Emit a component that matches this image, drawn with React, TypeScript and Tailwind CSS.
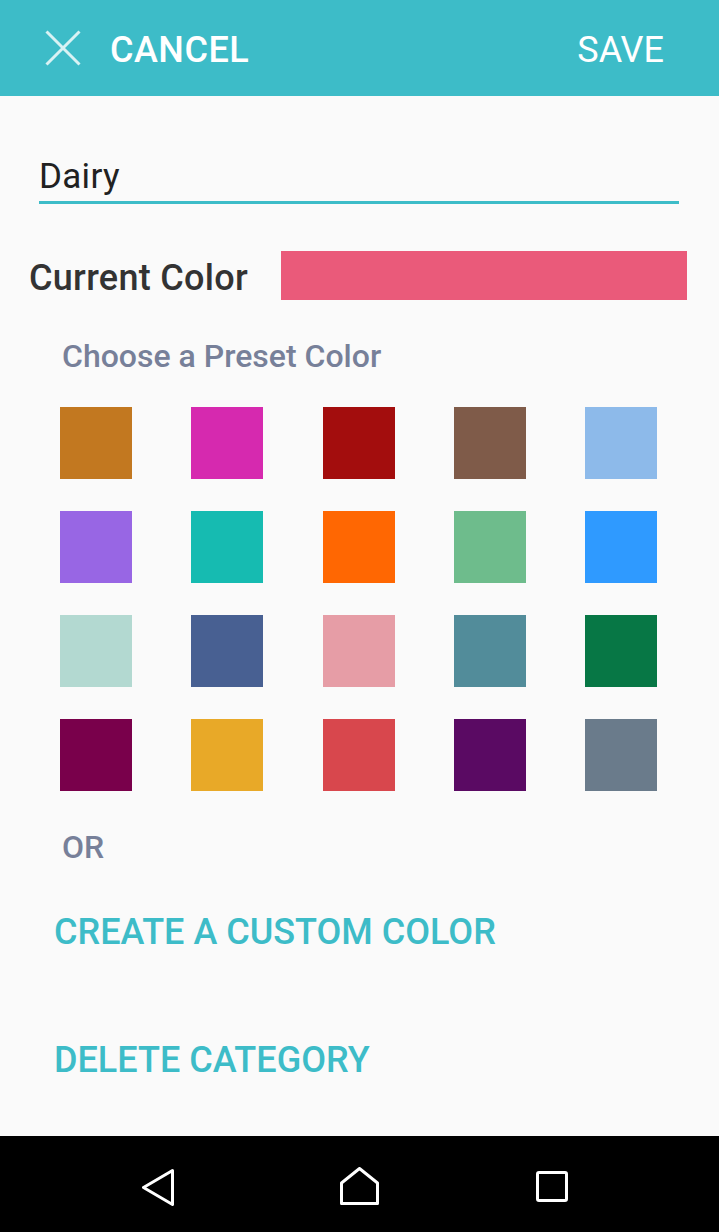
import React from 'react';

const presets = [
  '#C27820', '#D629AF', '#A30D0D', '#7F5B49', '#8DBAEA',
  '#9866E4', '#16BBB1', '#FF6702', '#6EBC8C', '#2F9AFF',
  '#B3D9D1', '#486092', '#E69DA6', '#528C9A', '#077745',
  '#79004B', '#E8A928', '#D8474D', '#5A0A63', '#6A7B8B',
];

function App() {
  return (
    <div className="flex h-[1232px] w-full flex-col bg-[#fafafa] font-['Roboto',sans-serif]">
      {/* top bar */}
      <header className="flex h-[96px] shrink-0 items-center bg-[#3dbcc8] pl-[45px] pr-[55px]">
        <svg width="36" height="36" viewBox="0 0 36 36" className="shrink-0">
          <path d="M1.5 1.5 L34.5 34.5 M34.5 1.5 L1.5 34.5" stroke="#ffffff" strokeOpacity="0.8" strokeWidth="3" />
        </svg>
        <span className="ml-[29px] pt-[3px] text-[36px] leading-[36px] font-medium tracking-[0.5px] text-white">CANCEL</span>
        <span className="ml-auto pt-[3px] text-[36px] leading-[36px] font-normal text-white">SAVE</span>
      </header>

      <main className="flex flex-1 flex-col">
        <div className="ml-[39px] mt-[63px] w-[640px] border-b-[3px] border-[#3dbcc8] pb-[7px]">
          <div className="text-[35px] leading-[35px] tracking-[0.3px] text-[#212121]">Dairy</div>
        </div>

        <div className="mt-[47px] flex items-start pl-[29px] pr-[32px]">
          <span className="mt-[9px] w-[252px] shrink-0 text-[36px] leading-[36px] font-medium tracking-[0.3px] text-[#333333]">
            Current Color
          </span>
          <div className="h-[49px] flex-1 bg-[#ea5a7a]" />
        </div>

        <div className="mt-[40px] pl-[62px] text-[32px] leading-[32px] font-medium text-[#778099]">
          Choose a Preset Color
        </div>

        <div className="ml-[60px] mt-[35px] grid w-[597px] grid-cols-5 gap-x-[59.25px] gap-y-[32px]">
          {presets.map((c) => (
            <button key={c} className="h-[72px] w-[72px]" style={{ backgroundColor: c }} />
          ))}
        </div>

        <div className="mt-[40px] pl-[62px] text-[32px] leading-[32px] font-medium text-[#778099]">OR</div>

        <button className="mt-[51px] self-start pl-[54px] text-[36px] leading-[36px] font-medium text-[#3dbcc8]">
          CREATE A CUSTOM COLOR
        </button>

        <button className="mt-[92px] self-start pl-[54px] text-[36px] leading-[36px] font-medium text-[#3dbcc8]">
          DELETE CATEGORY
        </button>
      </main>

      {/* android nav bar */}
      <nav className="flex h-[96px] shrink-0 items-start bg-black pl-[142px]">
        <svg width="32" height="37" viewBox="0 0 32 37" className="mt-[33px] shrink-0">
          <path d="M30.5 1.5 L1.5 18.5 L30.5 35.5 Z" fill="none" stroke="#fff" strokeWidth="3" strokeLinejoin="round" />
        </svg>
        <svg width="39" height="38" viewBox="0 0 39 38" className="ml-[166px] mt-[31px] shrink-0">
          <path d="M19.5 1.5 L37.5 16 L37.5 36.5 L1.5 36.5 L1.5 16 Z" fill="none" stroke="#fff" strokeWidth="3" strokeLinejoin="round" />
        </svg>
        <svg width="32" height="31" viewBox="0 0 32 31" className="ml-[157px] mt-[35px] shrink-0">
          <rect x="1.5" y="1.5" width="29" height="28" rx="1.5" fill="none" stroke="#fff" strokeWidth="3" />
        </svg>
      </nav>
    </div>
  );
}

export default App;
